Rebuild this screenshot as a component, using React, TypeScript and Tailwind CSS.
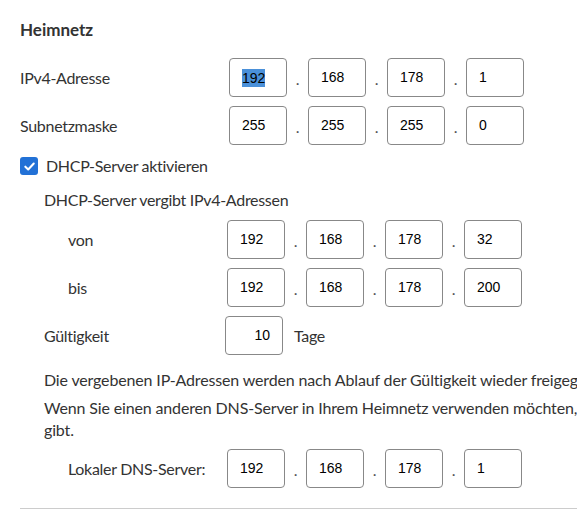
import React from "react";

const font = { fontFamily: "Lato, 'Noto Sans', sans-serif" };

function Box({ v, sel, right }: { v: string; sel?: boolean; right?: boolean }) {
  return (
    <div
      className={`w-[58px] h-[39px] shrink-0 border border-[#888888] rounded-[4px] bg-white flex items-center text-[14px] text-black tracking-normal ${right ? "justify-end pr-[12px]" : "pl-[12px]"}`}
      style={{ fontFamily: "'Liberation Sans', Arial, sans-serif" }}
    >
      {sel ? <span className="bg-[#4a90d9] leading-[18px]">{v}</span> : <span>{v}</span>}
    </div>
  );
}

function Dot() {
  return <div className="w-[21px] shrink-0 text-center text-[16px] text-[#555] pt-[3px]">.</div>;
}

function Ip({ parts, sel }: { parts: string[]; sel?: boolean }) {
  return (
    <div className="flex items-center">
      <Box v={parts[0]} sel={sel} />
      <Dot />
      <Box v={parts[1]} />
      <Dot />
      <Box v={parts[2]} />
      <Dot />
      <Box v={parts[3]} />
    </div>
  );
}

export default function App() {
  return (
    <div className="w-[577px] h-[509px] overflow-hidden bg-white" style={font}>
      <div className="w-[900px] pl-[20px] text-[#333333] text-[16px] tracking-[-0.3px]">
        <div className="pt-[19px] text-[17px] leading-[22px] font-bold tracking-normal">Heimnetz</div>

        <div className="mt-[17px] flex items-center h-[39px]">
          <div className="w-[209px]">IPv4-Adresse</div>
          <Ip parts={["192", "168", "178", "1"]} sel />
        </div>
        <div className="mt-[9px] flex items-center h-[39px]">
          <div className="w-[209px]">Subnetzmaske</div>
          <Ip parts={["255", "255", "255", "0"]} />
        </div>

        <div className="mt-[9px] flex items-center h-[24px]">
          <div className="w-[18px] h-[18px] rounded-[3px] bg-[#2271d6] flex items-center justify-center">
            <svg width="13" height="13" viewBox="0 0 14 14" fill="none">
              <path d="M2.5 7.2 L5.6 10.2 L11.6 3.8" stroke="white" strokeWidth="2.2" strokeLinecap="round" strokeLinejoin="round" />
            </svg>
          </div>
          <div className="ml-[8px]">DHCP-Server aktivieren</div>
        </div>

        <div className="pl-[24px]">
          <div className="mt-[10px] h-[24px] flex items-center">DHCP-Server vergibt IPv4-Adressen</div>
          <div className="mt-[8px] flex items-center h-[39px]">
            <div className="w-[183px] pl-[24px]">von</div>
            <Ip parts={["192", "168", "178", "32"]} />
          </div>
          <div className="mt-[9px] flex items-center h-[39px]">
            <div className="w-[183px] pl-[24px]">bis</div>
            <Ip parts={["192", "168", "178", "200"]} />
          </div>
          <div className="mt-[9px] flex items-center h-[39px]">
            <div className="w-[181px]">Gültigkeit</div>
            <Box v="10" right />
            <div className="ml-[11px]">Tage</div>
          </div>

          <div className="mt-[14px] leading-[22px] whitespace-nowrap tracking-[-0.15px]">
            Die vergebenen IP-Adressen werden nach Ablauf der Gültigkeit wieder freigegeben.
          </div>
          <div className="mt-[6px] leading-[22px] whitespace-nowrap tracking-[-0.15px]">
            Wenn Sie einen anderen DNS-Server in Ihrem Heimnetz verwenden möchten, tragen Sie hier die IP-Adresse ein, die der DHCP-Server weiter
            <br />
            gibt.
          </div>

          <div className="mt-[8px] flex items-center h-[39px]">
            <div className="w-[183px] pl-[24px]">Lokaler DNS-Server:</div>
            <Ip parts={["192", "168", "178", "1"]} />
          </div>
        </div>

        <div className="mt-[20px] border-t border-[#cccccc]" />
      </div>
    </div>
  );
}
